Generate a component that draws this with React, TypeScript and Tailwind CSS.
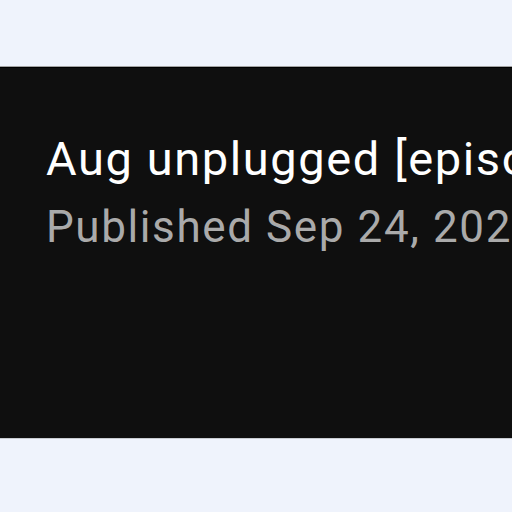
export default function App() {
  return (
    <div className="min-h-[512px] w-[512px] bg-[#eff3fc] overflow-hidden pt-[66px]">
      {/* video info card */}
      <div className="border-t border-[#a3a3a3] border-b border-b-[#c9ccd2] bg-[#0f0f0f] h-[373px] overflow-hidden">
        <div className="border-t border-black pl-[46px] pt-[61px] whitespace-nowrap font-['Roboto',sans-serif]">
          <h1 className="text-[47px] leading-[60px] tracking-[1.6px] text-white font-normal">
            Aug unplugged [episode 12]
          </h1>
          <p className="mt-[10px] text-[44px] leading-[56px] tracking-[1.6px] text-[#aaaaaa]">
            Published Sep 24, 2024
          </p>
        </div>
      </div>
    </div>
  );
}
